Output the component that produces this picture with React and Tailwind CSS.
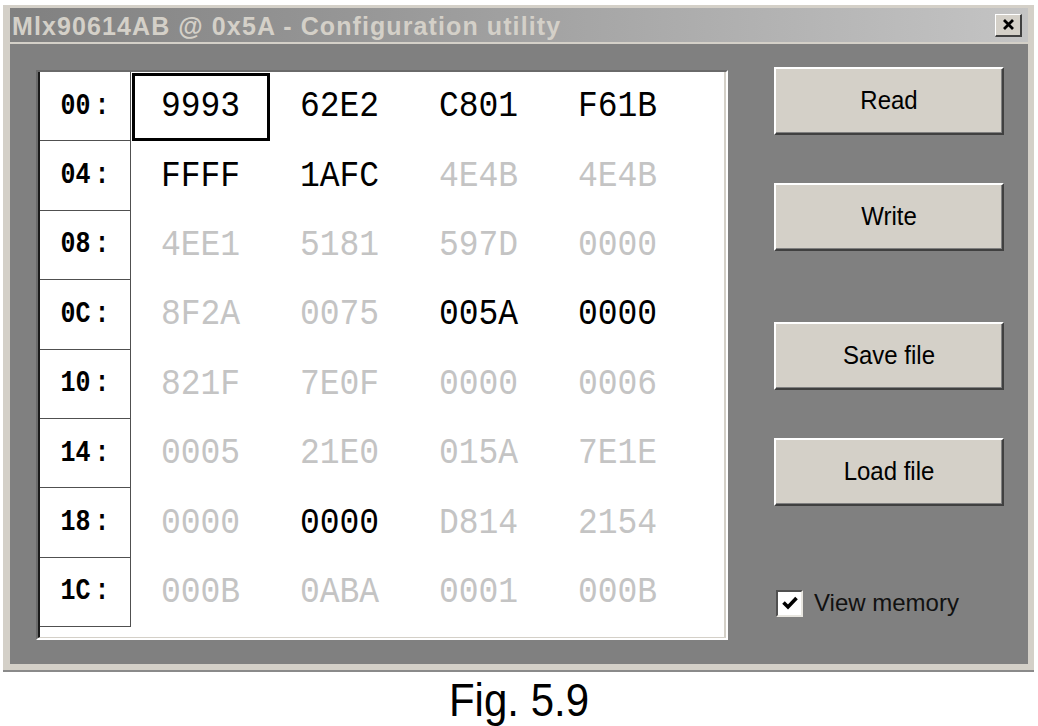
import React from "react";

const rows = [
  ["00", [["9993", 1], ["62E2", 1], ["C801", 1], ["F61B", 1]]],
  ["04", [["FFFF", 1], ["1AFC", 1], ["4E4B", 0], ["4E4B", 0]]],
  ["08", [["4EE1", 0], ["5181", 0], ["597D", 0], ["0000", 0]]],
  ["0C", [["8F2A", 0], ["0075", 0], ["005A", 1], ["0000", 1]]],
  ["10", [["821F", 0], ["7E0F", 0], ["0000", 0], ["0006", 0]]],
  ["14", [["0005", 0], ["21E0", 0], ["015A", 0], ["7E1E", 0]]],
  ["18", [["0000", 0], ["0000", 1], ["D814", 0], ["2154", 0]]],
  ["1C", [["000B", 0], ["0ABA", 0], ["0001", 0], ["000B", 0]]],
];

function Btn({ label, className }) {
  return (
    <div
      className={
        "h-[68px] w-[230px] bg-[#d4d0c8] border-t-2 border-l-2 border-t-white border-l-white border-b-2 border-r-2 border-b-[#404040] border-r-[#404040] flex items-center justify-center text-[24px] text-black shadow-[inset_-1px_-1px_0_#808080] " +
        (className || "")
      }
      style={{ fontFamily: '"Liberation Sans", Arial, sans-serif' }}
    >
      <span className="inline-block scale-y-105">{label}</span>
    </div>
  );
}

export default function App() {
  return (
    <div className="w-[1038px] h-[726px] bg-white overflow-hidden">
      <div className="ml-[3px] mt-[5px] w-[1031px] bg-[#d4d0c8] pt-[3px] pl-[7px] pr-[6px] pb-[6px] border-b-2 border-[#8a8a8a]">
        {/* title bar */}
        <div className="h-[34px] flex items-center bg-linear-to-r from-[#808080] to-[#c4c4c4] pl-[2px]">
          <span
            className="text-[25px] font-bold tracking-[1.1px] text-[#d4d0c8] pt-[2px] leading-none"
            style={{ fontFamily: '"Liberation Sans", Arial, sans-serif' }}
          >
            Mlx90614AB @ 0x5A - Configuration utility
          </span>
          <div className="ml-auto mr-[6px] w-[27px] h-[23px] bg-[#d4d0c8] border-t border-l border-white border-b-2 border-r-2 border-b-[#404040] border-r-[#404040] flex items-center justify-center">
            <svg width="13" height="11" viewBox="0 0 13 11">
              <path d="M2 1 L11 10 M11 1 L2 10" stroke="#000" strokeWidth="2.8" />
            </svg>
          </div>
        </div>
        {/* client */}
        <div className="mt-[2px] h-[620px] bg-[#808080] flex pl-[26px] pt-[26px]">
          <div className="w-[692px] h-[570px] border-t-2 border-l-2 border-t-[#6a6a6a] border-l-[#6a6a6a] border-b-2 border-r-2 border-b-white border-r-white">
            <div className="h-full bg-white border-l-2 border-l-[#1a1a1a] border-r-2 border-r-[#d4d0c8] border-b border-b-[#d4d0c8]">
              {rows.map(([label, vals], ri) => (
                <div key={label} className="flex h-[69.4px]">
                  <div className="w-[91px] shrink-0 border-r border-b border-[#505050] flex items-center justify-center">
                    <span
                      className="inline-flex items-center scale-y-115 text-[25px] font-bold text-black leading-none"
                      style={{ fontFamily: '"Liberation Mono", "Courier New", monospace' }}
                    >
                      <span>{label}</span>
                      <span className="ml-[4px]">:</span>
                    </span>
                  </div>
                  {vals.map(([v, on], ci) => (
                    <div key={ci} className="relative w-[139px] shrink-0 flex items-center justify-center">
                      {ri === 0 && ci === 0 && (
                        <div className="absolute left-[1px] top-[1px] right-0 bottom-0 border-[3px] border-black" />
                      )}
                      <span
                        className={
                          "inline-block scale-y-110 text-[33px] leading-none " +
                          (on ? "text-black" : "text-[#c4c4c4]")
                        }
                        style={{ fontFamily: '"Liberation Mono", "Courier New", monospace' }}
                      >
                        {v}
                      </span>
                    </div>
                  ))}
                </div>
              ))}
            </div>
          </div>
          <div className="ml-[46px] flex flex-col">
            <Btn label="Read" className="-mt-[3px]" />
            <Btn label="Write" className="mt-[48px]" />
            <Btn label="Save file" className="mt-[71px]" />
            <Btn label="Load file" className="mt-[48px]" />
            <div className="mt-[79px] flex items-center pl-[2px]">
              <div className="w-[27px] h-[27px] bg-white border-t-2 border-l-2 border-t-[#505050] border-l-[#505050] border-b-2 border-r-2 border-b-[#e8e6e0] border-r-[#e8e6e0] flex items-center justify-center">
                <svg width="18" height="16" viewBox="0 0 18 16">
                  <path d="M2.5 7.5 L7 12 L15.5 3" fill="none" stroke="#000" strokeWidth="3.6" />
                </svg>
              </div>
              <span
                className="ml-[11px] text-[24px] text-[#111]"
                style={{ fontFamily: '"Liberation Sans", Arial, sans-serif' }}
              >
                View memory
              </span>
            </div>
          </div>
        </div>
      </div>
      <div className="mt-[4px] text-center">
        <span
          className="inline-block scale-y-112 text-[42px] leading-[48px] text-black"
          style={{ fontFamily: '"Liberation Sans", Arial, sans-serif' }}
        >
          Fig. 5.9
        </span>
      </div>
    </div>
  );
}
